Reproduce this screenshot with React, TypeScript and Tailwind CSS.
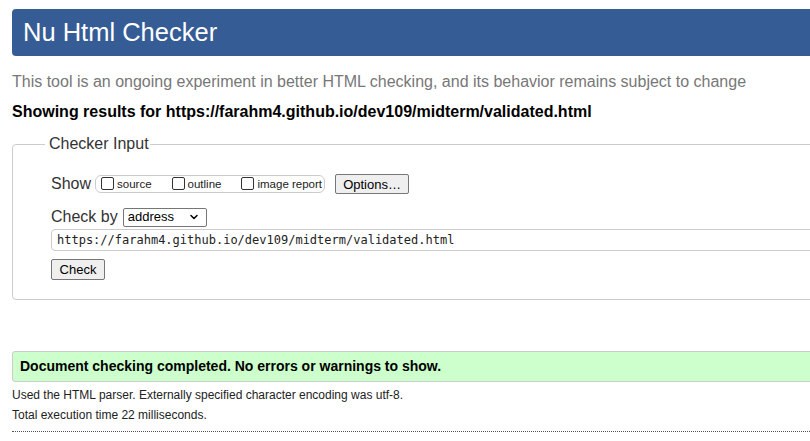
import { ChevronDown } from 'lucide-react';

const sans = "font-['Liberation_Sans',Arial,sans-serif]";

function CheckOption({ label }: { label: string }) {
  return (
    <label className="flex items-end gap-[3px]">
      <span className="inline-block w-[13px] h-[13px] mb-[1px] border border-[#333] rounded-[2px] bg-white" />
      <span className="text-[11.5px] leading-[14px] text-[#222]">{label}</span>
    </label>
  );
}

export default function App() {
  return (
    <div className={`w-[810px] h-[441px] overflow-hidden bg-white ${sans}`}>
      <div className="w-[1000px] pl-3 pt-[9px]">
        <h1 className="h-[47px] bg-[#365c96] rounded-l-[4px] pl-[11px] flex items-center text-[25.5px] text-white">
          Nu Html Checker
        </h1>

        <p className="mt-[17px] text-[16px] leading-[18px] text-[#777]">
          This tool is an ongoing experiment in better HTML checking, and its behavior remains subject to change
        </p>
        <p className="mt-[12px] text-[16px] leading-[18px] font-bold text-black">
          Showing results for https://farahm4.github.io/dev109/midterm/validated.html
        </p>

        <fieldset className="mt-[13px] h-[166px] border border-[#ccc] rounded-[4px] pl-[38px]">
          <legend className="-ml-[6px] pl-[4px] pr-[1px] text-[16px] leading-[20px] text-[#333]">Checker Input</legend>

          <div className="mt-[19px] flex items-center h-[22px]">
            <span className="text-[16px] text-[#333]">Show</span>
            <div className="ml-[4px] w-[230px] h-[18px] border border-[#ccc] rounded-[6px] flex items-center pl-[5px] gap-[20px]">
              <CheckOption label="source" />
              <CheckOption label="outline" />
              <CheckOption label="image report" />
            </div>
            <button className="ml-[10px] w-[74px] h-[20px] border border-[#767676] rounded-[2px] bg-[#efefef] text-[13px] text-black">
              Options…
            </button>
          </div>

          <div className="mt-[11px] flex items-center h-[22px]">
            <span className="text-[16px] text-[#333]">Check by</span>
            <div className="ml-[5px] w-[84px] h-[19px] border border-[#767676] rounded-[2px] flex items-center justify-between pl-[4px] pr-[6px] text-[13px] text-black bg-white">
              <span>address</span>
              <ChevronDown size={12} strokeWidth={3} />
            </div>
          </div>

          <div className="mt-[1px] h-[22px] border border-[#ccc] rounded-l-[4px] flex items-center pl-[5px] font-['DejaVu_Sans_Mono',monospace] text-[12px] text-[#222]">
            https://farahm4.github.io/dev109/midterm/validated.html
          </div>

          <button className="mt-[8px] w-[54px] h-[21px] border border-[#767676] rounded-[2px] bg-[#efefef] text-[13px] text-black">
            Check
          </button>
        </fieldset>

        <div className="mt-[51px] h-[31px] bg-[#ccffcc] border border-[#ccc] rounded-l-[3px] flex items-center pl-[7px] text-[14px] font-bold text-black">
          Document checking completed. No errors or warnings to show.
        </div>

        <p className="mt-[6px] text-[12px] leading-[14px] text-[#222]">
          Used the HTML parser. Externally specified character encoding was utf-8.
        </p>
        <p className="mt-[6px] text-[12px] leading-[14px] text-[#222]">Total execution time 22 milliseconds.</p>

        <div className="mt-[9px] border-t border-dotted border-[#555]" />
      </div>
    </div>
  );
}
